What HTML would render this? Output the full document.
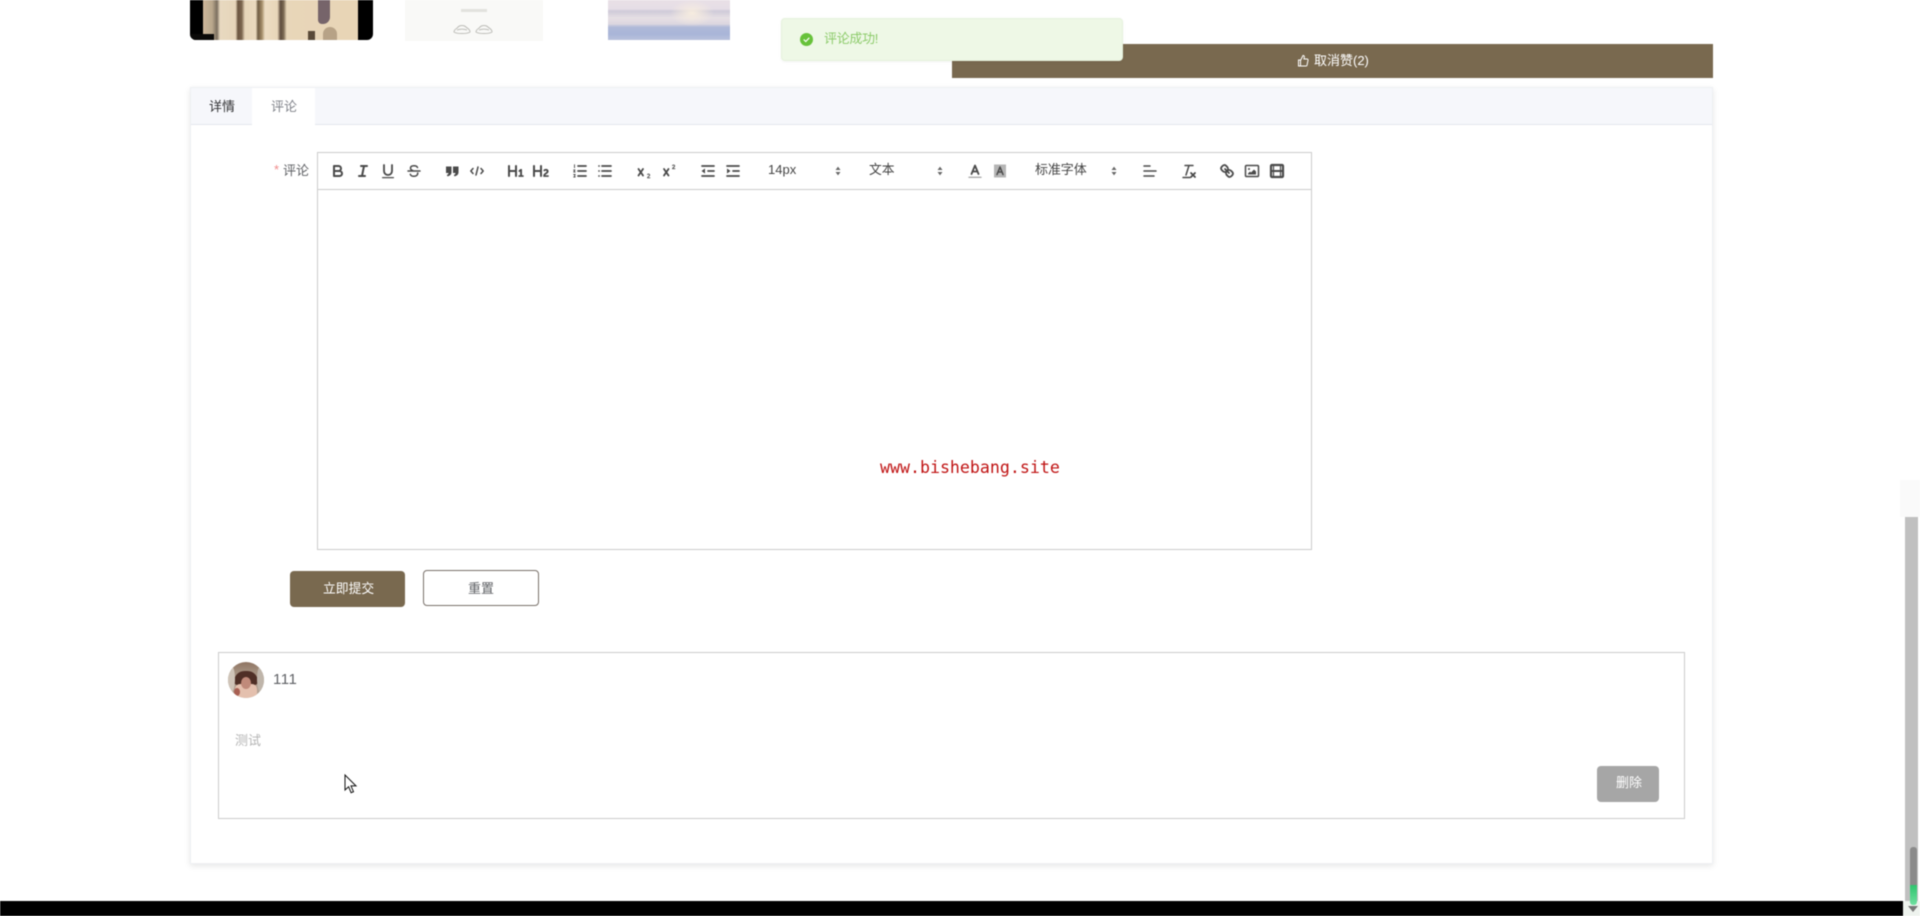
<!DOCTYPE html>
<html lang="zh">
<head>
<meta charset="utf-8">
<title>评论</title>
<style>
html,body{margin:0;padding:0;width:1920px;height:916px;overflow:hidden;background:#fff}
body{font-family:"Liberation Sans","Noto Sans CJK SC",sans-serif;position:relative}
#w{position:absolute;left:0;top:0;width:1920px;height:916px;filter:blur(.5px);overflow:hidden}
.a{position:absolute}
.t{position:absolute;white-space:nowrap;line-height:20px;font-size:13px}
svg.i{position:absolute;width:18px;height:18px;top:162px;fill:none;stroke:#4a4a4a;stroke-width:1.5;stroke-linecap:round;stroke-linejoin:round}
svg.i .f{fill:#4a4a4a;stroke:none}
svg.i.b{stroke-width:2}
svg.p{position:absolute;width:18px;height:18px;top:162px;fill:#666;stroke:#666;stroke-width:1}
</style>
</head>
<body>
<div id="w">
<!-- images -->
<div class="a" style="left:190px;top:0;width:183px;height:40px;background:#000;border-radius:0 0 6px 6px;overflow:hidden">
  <div class="a" style="left:13px;top:0;width:155px;height:40px;background:linear-gradient(90deg,#cdb89a 0,#b8a68c 6%,#7b6f5f 9%,#e8d9c0 11%,#e6d5ba 21%,#6b5540 22.500%,#7c6650 25%,#e6d5ba 27%,#ead9be 34%,#6e5a42 35.500%,#a38c68 38%,#ecdcc2 40%,#e8d6b9 48%,#5d4b3c 50%,#7a6852 52%,#e8d6b9 54%,#e8d5b6 100%)"></div>
  <div class="a" style="left:0;top:34px;width:24px;height:6px;background:#0a0908"></div>
  <div class="a" style="left:128px;top:0;width:12px;height:24px;background:#76646a;border-radius:0 0 7px 4px"></div>
  <div class="a" style="left:118px;top:31px;width:7px;height:9px;background:#5a4a38"></div>
  <div class="a" style="left:133px;top:27px;width:14px;height:13px;background:#b7a286;border-radius:7px 7px 0 0"></div>
</div>
<div class="a" style="left:405px;top:0;width:138px;height:41px;background:#f9f9f7"></div>
<div class="a" style="left:461px;top:9px;width:26px;height:3px;background:#e2e2de"></div>
<svg class="a" style="left:452px;top:22px" width="44" height="16" viewBox="0 0 44 16" fill="none" stroke="#bdbdb8" stroke-width="1"><path d="M2 10c0-3 3-3 4-5 2-2 6-2 8 0 2 2 4 2 4 5-3 2-13 2-16 0zM5 8c3-1 7-1 10 0M24 10c0-3 3-3 4-5 2-2 6-2 8 0 2 2 4 2 4 5-3 2-13 2-16 0zM27 8c3-1 7-1 10 0"/></svg>
<div class="a" style="left:608px;top:0;width:122px;height:40px;background:linear-gradient(180deg,#e9e0e6 0,#e6dee6 22%,#cfcbd9 28%,#e6dfe4 45%,#dcd7e0 60%,#afb9d8 68%,#a9b5d8 85%,#b9c1dc 100%)"></div>
<div class="a" style="left:670px;top:0;width:44px;height:26px;background:radial-gradient(ellipse at center,rgba(251,240,224,.9),rgba(251,240,224,0) 70%)"></div>

<!-- like bar -->
<div class="a" style="left:952px;top:44px;width:761px;height:34px;background:#79694f"></div>
<svg class="a" style="left:1297px;top:54px" width="12" height="13" viewBox="0 0 12 13" fill="none" stroke="#fff" stroke-width="1"><path d="M1.500 6h2v6h-2zM3.500 6.500 6 1.500c1 0 1.500.7 1.300 1.700L7 5h3c.8 0 1.200.6 1 1.300l-1 5c-.1.500-.5.700-1 .7H3.500"/></svg>
<div class="t" style="left:1314px;top:51px;color:#fff">取消赞(2)</div>

<!-- toast -->
<div class="a" style="left:781px;top:18px;width:342px;height:43px;background:#eef8e6;border:1px solid #e6f2dd;border-radius:4px;box-sizing:border-box;box-shadow:0 1px 3px rgba(0,0,0,.05)"></div>
<svg class="a" style="left:800px;top:33px" width="13" height="13" viewBox="0 0 14 14"><circle cx="7" cy="7" r="7" fill="#67c23a"/><path d="M4 7l2.200 2.200L10 5.200" stroke="#fff" stroke-width="1.300" fill="none"/></svg>
<div class="t" style="left:824px;top:29px;color:#8ccb6a;width:54px;letter-spacing:-.3px">评论成功!</div>

<!-- card -->
<div class="a" style="left:190px;top:87px;width:1523px;height:777px;background:#fff;box-sizing:border-box;border:1px solid #eef0f3;box-shadow:0 2px 6px rgba(0,0,0,.1)"></div>
<div class="a" style="left:191px;top:88px;width:1521px;height:37px;background:#f6f7fb;border-bottom:1px solid #e4e7ed;box-sizing:border-box"></div>
<div class="a" style="left:252px;top:88px;width:63px;height:37px;background:#fff"></div>
<div class="t" style="left:209px;top:97px;color:#303133">详情</div>
<div class="t" style="left:271px;top:97px;color:#80838a">评论</div>

<!-- label -->
<div class="t" style="left:274px;top:160px;color:#f08a8a">*</div>
<div class="t" style="left:283px;top:161px;color:#606266">评论</div>

<!-- editor -->
<div class="a" style="left:317px;top:152px;width:995px;height:398px;border:1px solid #ccc;box-sizing:border-box;background:#fff"></div>
<div class="a" style="left:318px;top:189px;width:993px;height:1px;background:#ccc"></div>

<!-- toolbar icons -->
<svg class="i b" style="left:329px" viewBox="0 0 18 18"><path d="M5 4h4.500a2.500 2.500 0 0 1 0 5H5zM5 9h5.500a2.500 2.500 0 0 1 0 5H5z"/></svg>
<svg class="i b" style="left:354px" viewBox="0 0 18 18"><path d="M7 4h6M5 14h6M8 14l2-10"/></svg>
<svg class="i" style="left:379px" viewBox="0 0 18 18"><path d="M5 3v6a4 4 0 0 0 4 4 4 4 0 0 0 4-4V3" stroke-width="1.800"/><rect class="f" x="3" y="15" width="12" height="1.200" rx=".5"/></svg>
<svg class="i" style="left:405px" viewBox="0 0 18 18"><path d="M12.500 5.500C12 4.300 10.700 3.800 9 3.800c-2 0-3.500.8-3.500 2.300 0 1 .8 1.900 2.200 2.400M3 9h12M12.700 11c.2 2-1.500 3.300-3.700 3.300-1.900 0-3.300-.7-3.700-2"/></svg>
<svg class="i" style="left:443px" viewBox="0 0 18 18"><path class="f" d="M3 4.500h5.500v5.700C8.500 12.700 6.500 14 4.300 14.300l-.4-1.500c1-.2 1.500-.8 1.600-1.800H3zM10 4.500h5.500v5.700c0 2.500-2 3.800-4.200 4.100l-.4-1.500c1-.2 1.500-.8 1.600-1.800H10z"/></svg>
<svg class="i" style="left:468px" viewBox="0 0 18 18"><path d="M5 6.500 2.800 9 5 11.500M13 6.500 15.200 9 13 11.500M10 5l-2 8"/></svg>
<svg class="i" style="left:507px" viewBox="0 0 18 18"><path class="f" d="M10,4V14a1,1,0,0,1-2,0V10H3v4a1,1,0,0,1-2,0V4a1,1,0,0,1,2,0V8H8V4a1,1,0,0,1,2,0Zm6.06787,9.209H14.98975V7.59863a.54085.54085,0,0,0-.605-.60547h-.62744a1.01119,1.01119,0,0,0-.748.29688L11.645,8.56641a.5435.5435,0,0,0-.022.8584l.28613.30762a.53861.53861,0,0,0,.84717.0332l.09912-.08789a1.2137,1.2137,0,0,0,.2417-.35254h.02246s-.01123.30859-.01123.60547V13.209H12.041a.54085.54085,0,0,0-.605.60547v.43945a.54085.54085,0,0,0,.605.60547h4.02686a.54085.54085,0,0,0,.605-.60547v-.43945A.54085.54085,0,0,0,16.06787,13.209Z"/></svg>
<svg class="i" style="left:532px" viewBox="0 0 18 18"><path class="f" d="M16.73975,13.81445v.43945a.54085.54085,0,0,1-.605.60547H11.855a.58392.58392,0,0,1-.64893-.60547V14.0127c0-2.90527,3.39941-3.42187,3.39941-4.55469a.77675.77675,0,0,0-.84717-.78125,1.17684,1.17684,0,0,0-.83594.38477c-.2749.26367-.561.374-.85791.13184l-.4292-.34082c-.30811-.24219-.38525-.51758-.1543-.81445a2.97155,2.97155,0,0,1,2.45361-1.17676,2.45393,2.45393,0,0,1,2.68408,2.40918c0,2.45312-3.1792,2.92676-3.27832,3.93848h2.79443A.54085.54085,0,0,1,16.73975,13.81445ZM9,3A.99974.99974,0,0,0,8,4V8H3V4A1,1,0,0,0,1,4V14a1,1,0,0,0,2,0V10H8v4a1,1,0,0,0,2,0V4A.99974.99974,0,0,0,9,3Z"/></svg>
<svg class="i" style="left:571px" viewBox="0 0 18 18"><path d="M7 4h8M7 9h8M7 14h8" stroke-width="1.700"/><path d="M3.500 2.700v3M2.700 8h1.300l-1.300 2h1.500M2.700 12.500h1.500l-.7 1.300.7 1.200H2.700" stroke-width=".9"/></svg>
<svg class="i" style="left:596px" viewBox="0 0 18 18"><path d="M6 4h9M6 9h9M6 14h9M3 4h.01M3 9h.01M3 14h.01" stroke-width="1.700"/></svg>
<svg class="i" style="left:635px" viewBox="0 0 18 18"><path d="M3.500 7l4.500 6.500M8 7l-4.500 6.500" stroke-width="1.800"/><path d="M12.500 12.500c.5-.6 2.200-.6 2.200.6 0 1-2.200 1.500-2.200 2.700h2.400" stroke-width=".9"/></svg>
<svg class="i" style="left:661px" viewBox="0 0 18 18"><path d="M3 7l4.500 6.500M7.500 7 3 13.500" stroke-width="1.800"/><path d="M11.500 3.500c.5-.7 2.200-.7 2.200.5 0 1-2.200 1.500-2.200 2.700h2.400" stroke-width=".9"/></svg>
<svg class="i" style="left:699px" viewBox="0 0 18 18"><path d="M3 4h12M3 14h12M9 9h6" stroke-width="1.700"/><path class="f" d="M6 6.500v5L2.500 9z"/></svg>
<svg class="i" style="left:724px" viewBox="0 0 18 18"><path d="M3 4h12M3 14h12M9 9h6" stroke-width="1.700"/><path class="f" d="M3 6.500v5L6.500 9z"/></svg>
<div class="t" style="left:768px;top:160px;color:#444">14px</div>
<svg class="p" style="left:829px" viewBox="0 0 18 18"><path d="M7.500 10.500 9 12.500l1.500-2zM7.500 7.500 9 5.500l1.500 2z"/></svg>
<div class="t" style="left:869px;top:160px;color:#444;font-size:12.800px">文本</div>
<svg class="p" style="left:931px" viewBox="0 0 18 18"><path d="M7.500 10.500 9 12.500l1.500-2zM7.500 7.500 9 5.500l1.500 2z"/></svg>
<svg class="i" style="left:966px" viewBox="0 0 18 18"><path d="M5.500 12 9 3.500l3.500 8.500M6.500 9.500h5" stroke-width="1.800"/><path d="M3 15.300h12" stroke="#aaa" stroke-width="1.400"/></svg>
<svg class="i" style="left:991px" viewBox="0 0 18 18"><rect x="3" y="2.500" width="12" height="13" fill="#b5b5b5" stroke="none"/><path d="M6 12.500 9 5l3 7.500M7 10h4" stroke-width="1.500"/></svg>
<div class="t" style="left:1035px;top:160px;color:#444;letter-spacing:-.1px">标准字体</div>
<svg class="p" style="left:1105px" viewBox="0 0 18 18"><path d="M7.500 10.500 9 12.500l1.500-2zM7.500 7.500 9 5.500l1.500 2z"/></svg>
<svg class="i" style="left:1141px" viewBox="0 0 18 18"><path d="M3 4h6M3 9h12M3 14h10"/></svg>
<svg class="i" style="left:1180px" viewBox="0 0 18 18"><path d="M5 3.500h8M9 3.500 6 13M3 15.500h7"/><path d="M11 11l4 4M15 11l-4 4" stroke-width="1.800"/></svg>
<svg class="i" style="left:1218px" viewBox="0 0 18 18"><path d="M7 7l4 4" stroke-width="1.800"/><path stroke-width="1.800" d="M8.900,4.577a3.476,3.476,0,0,1,.36,4.679A3.476,3.476,0,0,1,4.577,8.900C3.185,7.500,2.035,6.400,4.217,4.217S7.500,3.185,8.900,4.577Z"/><path stroke-width="1.800" d="M13.423,9.100a3.476,3.476,0,0,0-4.679-.36,3.476,3.476,0,0,0,.36,4.679c1.392,1.392,2.500,2.542,4.679.36S14.815,10.500,13.423,9.100Z"/></svg>
<svg class="i" style="left:1243px" viewBox="0 0 18 18"><rect x="2.500" y="3.500" width="13" height="11" rx="1"/><circle class="f" cx="6" cy="7" r="1"/><path class="f" d="M5 12.500v-1l2-2 1 1 3-3 2 2v3z"/></svg>
<svg class="i" style="left:1268px" viewBox="0 0 18 18"><rect x="3" y="3" width="12" height="12" rx="1" stroke-width="2.200"/><path d="M3 9h12" stroke-width="2"/><path d="M5.500 3v12M12.500 3v12" stroke-width="1.200" stroke="#4a4a4a"/></svg>

<div class="a" style="left:880px;top:458px;font:16.6px/20px 'DejaVu Sans Mono','Liberation Mono',monospace;color:#c01414;white-space:nowrap">www.bishebang.site</div>

<!-- buttons -->
<div class="a" style="left:290px;top:571px;width:115px;height:36px;background:#79694f;border-radius:4px"></div>
<div class="t" style="left:323px;top:579px;color:#fff;font-size:12.800px">立即提交</div>
<div class="a" style="left:423px;top:570px;width:116px;height:36px;background:#fff;border:1px solid #79716a;border-radius:4px;box-sizing:border-box"></div>
<div class="t" style="left:468px;top:579px;color:#606266">重置</div>

<!-- comment -->
<div class="a" style="left:218px;top:652px;width:1467px;height:167px;border:1px solid #ccc;box-sizing:border-box;background:#fff"></div>
<div class="a" style="left:228px;top:662px;width:36px;height:36px;border-radius:50%;overflow:hidden;background:linear-gradient(180deg,#8f7462 0,#a28d7c 25%,#b8a99c 100%)">
  <div class="a" style="left:6px;top:9px;width:24px;height:14px;background:#4f2f26;border-radius:12px 12px 4px 4px"></div>
  <div class="a" style="left:0;top:4px;width:7px;height:26px;background:#cfc4b8;border-radius:50%"></div>
  <div class="a" style="left:29px;top:4px;width:7px;height:26px;background:#bfb5aa;border-radius:50%"></div>
  <div class="a" style="left:7px;top:22px;width:22px;height:14px;background:#e4c0ae;border-radius:5px"></div>
  <div class="a" style="left:13px;top:15px;width:10px;height:12px;background:#c08a7a;border-radius:50%"></div>
  <div class="a" style="left:6px;top:26px;width:6px;height:8px;background:#a85f52;border-radius:50%"></div>
</div>
<div class="a" style="left:273px;top:670px;font-size:15px;line-height:20px;color:#606266;letter-spacing:.5px">111</div>
<div class="t" style="left:235px;top:731px;color:#b4b4b4">测试</div>
<div class="a" style="left:1597px;top:766px;width:62px;height:36px;background:#a6a6a6;border-radius:4px"></div>
<div class="t" style="left:1616px;top:773px;color:#fff">删除</div>

<!-- cursor -->
<svg class="a" style="left:344px;top:774px" width="14" height="21" viewBox="0 0 14 21"><path d="M1 1v15l3.600-3.300 2.500 6 2.400-1-2.500-5.800h5z" fill="#fff" stroke="#111" stroke-width="1"/></svg>

<!-- footer -->
<div class="a" style="left:0;top:901px;width:1903px;height:15px;background:#000"></div>

<!-- scrollbar -->
<div class="a" style="left:1905px;top:517px;width:13px;height:384px;background:#c0c0c0"></div>
<div class="a" style="left:1900px;top:480px;width:20px;height:37px;background:#fafafa"></div>
<div class="a" style="left:1903px;top:901px;width:17px;height:15px;background:#eef3ee"></div>
<div class="a" style="left:1910px;top:847px;width:7px;height:38px;background:#8a8a8a;border-radius:3px 3px 0 0"></div>
<div class="a" style="left:1910px;top:885px;width:7px;height:20px;background:linear-gradient(180deg,#2fc46e,#6fe0a0);border-radius:0 0 3px 3px"></div>
<svg class="a" style="left:1908px;top:906px" width="10" height="6"><path d="M0 0h10L5 6z" fill="#777"/></svg>
</div>
</body>
</html>
